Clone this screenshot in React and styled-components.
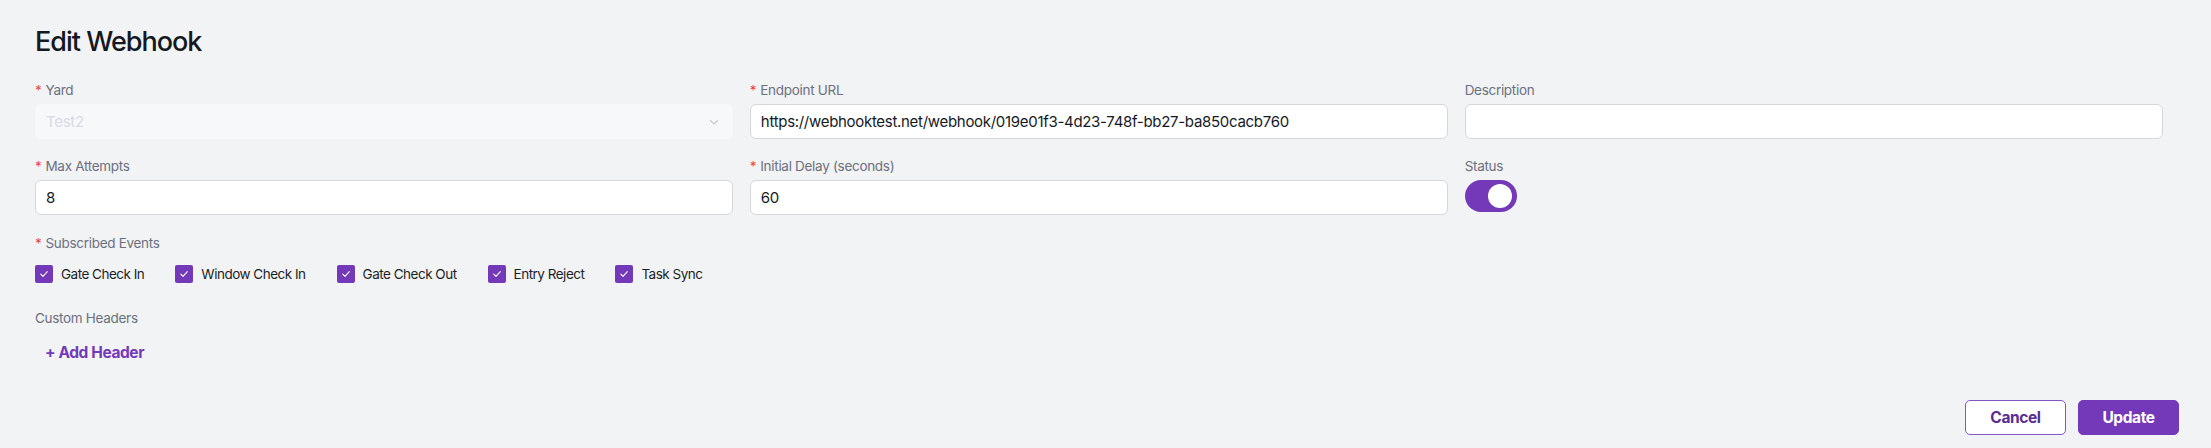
import React, { useState } from 'react';
import styled, { createGlobalStyle } from 'styled-components';

const EVENTS = ['Gate Check In', 'Window Check In', 'Gate Check Out', 'Entry Reject', 'Task Sync'];

const App = () => {
  const [url, setUrl] = useState('https://webhooktest.net/webhook/019e01f3-4d23-748f-bb27-ba850cacb760');
  const [description, setDescription] = useState('');
  const [maxAttempts, setMaxAttempts] = useState('8');
  const [delay, setDelay] = useState('60');
  const [active, setActive] = useState(true);
  const [events, setEvents] = useState(EVENTS);

  const toggleEvent = name => {
    setEvents(prev => (prev.includes(name) ? prev.filter(e => e !== name) : [...prev, name]));
  };

  return (
    <>
      <GlobalStyle />
      <Page>
        <Title>Edit Webhook</Title>

        <FormGrid>
          <Field>
            <Label required>Yard</Label>
            <SelectBox>
              <span>Test2</span>
              <svg width="12" height="12" viewBox="0 0 12 12" fill="none">
                <path d="M2.5 4.5L6 8l3.5-3.5" stroke="#c4c8d0" strokeWidth="1.1" strokeLinecap="round" strokeLinejoin="round" />
              </svg>
            </SelectBox>
          </Field>
          <Field>
            <Label required>Endpoint URL</Label>
            <Input value={url} onChange={e => setUrl(e.target.value)} />
          </Field>
          <Field>
            <Label>Description</Label>
            <Input value={description} onChange={e => setDescription(e.target.value)} />
          </Field>

          <Field>
            <Label required>Max Attempts</Label>
            <Input value={maxAttempts} onChange={e => setMaxAttempts(e.target.value)} />
          </Field>
          <Field>
            <Label required>Initial Delay (seconds)</Label>
            <Input value={delay} onChange={e => setDelay(e.target.value)} />
          </Field>
          <Field>
            <Label>Status</Label>
            <Switch type="button" on={active ? 1 : 0} onClick={() => setActive(!active)}>
              <Knob />
            </Switch>
          </Field>
        </FormGrid>

        <Section>
          <Label required>Subscribed Events</Label>
          <CheckRow>
            {EVENTS.map(name => (
              <CheckItem key={name} onClick={() => toggleEvent(name)}>
                <Box checked={events.includes(name) ? 1 : 0}>
                  {events.includes(name) && (
                    <svg width="10" height="10" viewBox="0 0 10 10" fill="none">
                      <path d="M1.8 5.2l2.2 2.2 4.3-4.8" stroke="#fff" strokeWidth="1.1" strokeLinecap="round" strokeLinejoin="round" />
                    </svg>
                  )}
                </Box>
                {name}
              </CheckItem>
            ))}
          </CheckRow>
        </Section>

        <HeadersSection>
          <Label>Custom Headers</Label>
          <LinkButton type="button">+ Add Header</LinkButton>
        </HeadersSection>

        <Footer>
          <Button variant="outline">Cancel</Button>
          <Button>Update</Button>
        </Footer>
      </Page>
    </>
  );
};

export default App;

// ------------------------ styles ------------------------

const GlobalStyle = createGlobalStyle`
  html, body {
    margin: 0;
    padding: 0;
    background: #f2f3f5;
  }
  body {
    font-family: Inter, "Liberation Sans", sans-serif;
    color: #1c1f26;
  }
  * { box-sizing: border-box; }
`;

const Page = styled.div`
  width: 2211px;
  height: 448px;
  padding: 24px 32px 0 35px;
  background: #f2f3f5;
`;

const Title = styled.h1`
  margin: 0;
  font-size: 27px;
  line-height: 36px;
  font-weight: 500;
  letter-spacing: -1px;
  color: #141821;
`;

const FormGrid = styled.div`
  display: grid;
  grid-template-columns: repeat(3, 1fr);
  column-gap: 16.5px;
  row-gap: 17px;
  margin: 20px 16px 0 0;
`;

const Field = styled.div`
  display: flex;
  flex-direction: column;
  gap: 4px;
`;

const Label = styled.label`
  display: block;
  font-size: 13.5px;
  line-height: 20px;
  color: #6b7080;
  letter-spacing: -0.3px;

  &::before {
    content: ${p => (p.required ? '"*"' : 'none')};
    color: #ef4444;
    margin-right: 4px;
  }
`;

const Input = styled.input`
  height: 35px;
  width: 100%;
  padding: 0 10px;
  font-family: inherit;
  font-size: 15px;
  letter-spacing: -0.3px;
  color: #16191f;
  background: #fff;
  border: 1px solid #d4d7dd;
  border-radius: 6px;
  outline: none;
`;

const SelectBox = styled.div`
  display: flex;
  align-items: center;
  justify-content: space-between;
  height: 35px;
  padding: 0 13px 0 11px;
  font-size: 15px;
  letter-spacing: -0.3px;
  color: #d7dbe3;
  background: #f7f8fa;
  border-radius: 6px;
`;

const Switch = styled.button`
  width: 52px;
  height: 32px;
  padding: 4px 5px 4px 4px;
  border: none;
  border-radius: 16px;
  background: ${p => (p.on ? '#7339b9' : '#d1d5db')};
  display: flex;
  justify-content: ${p => (p.on ? 'flex-end' : 'flex-start')};
  cursor: pointer;
`;

const Knob = styled.span`
  width: 24px;
  height: 24px;
  border-radius: 50%;
  background: #fff;
`;

const Section = styled.div`
  margin-top: 18px;
`;

const CheckRow = styled.div`
  display: flex;
  gap: 31px;
  margin-top: 11px;
`;

const CheckItem = styled.div`
  display: flex;
  align-items: center;
  gap: 8px;
  font-size: 13.5px;
  line-height: 20px;
  letter-spacing: -0.5px;
  color: #1c1f26;
  cursor: pointer;
`;

const Box = styled.span`
  flex: none;
  width: 18px;
  height: 18px;
  border-radius: 2px;
  display: flex;
  align-items: center;
  justify-content: center;
  background: ${p => (p.checked ? '#7339b9' : '#fff')};
  border: ${p => (p.checked ? 'none' : '1px solid #d4d7dd')};
`;

const HeadersSection = styled.div`
  margin-top: 24px;
`;

const LinkButton = styled.button`
  display: block;
  margin-top: 8px;
  height: 32px;
  padding: 0 10px;
  border: none;
  background: transparent;
  font-family: inherit;
  font-size: 15.5px;
  font-weight: 700;
  letter-spacing: -0.4px;
  color: #7339b9;
  cursor: pointer;
`;

const Footer = styled.div`
  display: flex;
  justify-content: flex-end;
  gap: 12px;
  margin-top: 32px;
`;

const Button = styled.button`
  width: 101px;
  height: 35px;
  border-radius: 5px;
  font-family: inherit;
  font-size: 15.5px;
  font-weight: 700;
  letter-spacing: -0.4px;
  cursor: pointer;
  border: 1px solid ${p => (p.variant === 'outline' ? '#8456c4' : '#7339b9')};
  background: ${p => (p.variant === 'outline' ? '#fff' : '#7339b9')};
  color: ${p => (p.variant === 'outline' ? '#5a2d90' : '#fff')};
`;
